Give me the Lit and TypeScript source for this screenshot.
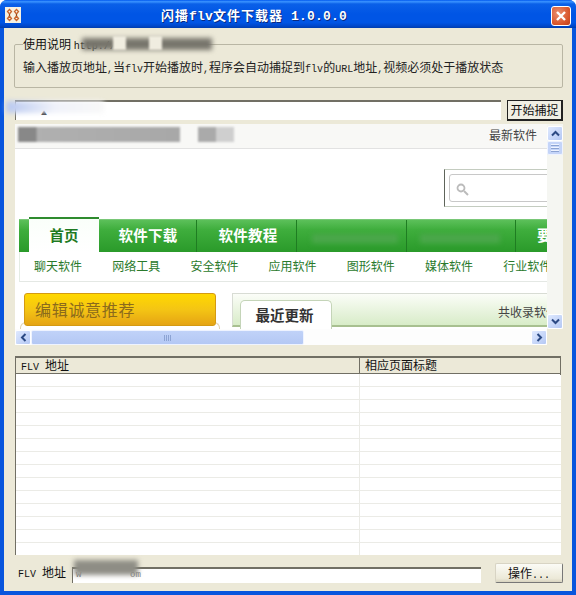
import { LitElement, html, css } from "lit";
import { customElement } from "lit/decorators.js";

const up = html`<svg width="9" height="7" viewBox="0 0 9 7"><path d="M1 5.5 4.5 2 8 5.5" fill="none" stroke="#2c4a84" stroke-width="2"/></svg>`;
const down = html`<svg width="9" height="7" viewBox="0 0 9 7"><path d="M1 1.5 4.5 5 8 1.5" fill="none" stroke="#2c4a84" stroke-width="2"/></svg>`;
const left = html`<svg width="7" height="9" viewBox="0 0 7 9"><path d="M5.5 1 2 4.5 5.5 8" fill="none" stroke="#2c4a84" stroke-width="2"/></svg>`;
const right = html`<svg width="7" height="9" viewBox="0 0 7 9"><path d="M1.5 1 5 4.5 1.5 8" fill="none" stroke="#2c4a84" stroke-width="2"/></svg>`;

@customElement("app-root")
export class AppRoot extends LitElement {
  static styles = css`
    :host {
      display: block;
      width: 576px;
      height: 595px;
      overflow: hidden;
      background: #fff;
      font-family: "Noto Sans CJK SC", "Liberation Sans", sans-serif;
      font-size: 12px;
      color: #111;
    }
    .lat { font-family: "Liberation Mono", monospace; font-size: 10px; }
    .window {
      position: relative;
      width: 576px;
      height: 595px;
      display: flex;
      flex-direction: column;
      box-sizing: border-box;
      background: #0855dd;
      border-radius: 7px 7px 0 0;
      overflow: hidden;
    }
    .titlebar {
      height: 28px;
      flex: none;
      display: flex;
      align-items: center;
      position: relative;
      background: linear-gradient(#0058ee 0, #3a93ff 6%, #0a60e8 14%, #0055e5 50%, #0055e5 80%, #0048cc 92%, #003dae 100%);
    }
    .appicon {
      width: 16px; height: 16px; margin-left: 5px; margin-top: 2px; background: #f6f1e2;
      display: flex; align-items: center; justify-content: center; flex: none;
    }
    .title {
      position: absolute;
      left: 161px;
      top: 6px;
      font-size: 13px;
      line-height: 18px;
      font-weight: 700;
      color: #fff;
      white-space: pre;
      letter-spacing: 1px;
      text-shadow: 1px 1px 0 #0a2a80;
    }
    .title .titlelat { font-family: "Liberation Mono", monospace; letter-spacing: 0.2px; }
    .close {
      position: absolute;
      right: 5px; top: 6px;
      width: 20px; height: 20px;
      box-sizing: border-box;
      border: 1px solid #fff;
      border-radius: 3px;
      background: radial-gradient(circle at 35% 35%, #ea8f70, #d9562c 65%, #bf3f1a);
      display: flex; align-items: center; justify-content: center;
    }
    .client {
      flex: 1;
      margin: 0 4px 4px;
      background: #ece9d8;
      padding: 16px 9px 0 10px;
      display: flex;
      flex-direction: column;
      min-height: 0;
    }
    .group {
      height: 44px;
      flex: none;
      box-sizing: border-box;
      border: 1px solid #b9b6a4;
      border-radius: 2px;
      padding-left: 8px;
    }
    .legend {
      display: block;
      width: fit-content;
      background: #ece9d8;
      padding: 0 3px 0 0;
      margin: -9px 0 0 0;
      height: 16px;
      line-height: 16px;
      font-size: 12px;
      white-space: nowrap;
    }
    .desc {
      display: block;
      margin-top: 7px;
      height: 16px;
      line-height: 16px;
      font-size: 12px;
      white-space: pre;
      color: #222;
    }
    .urlrow {
      display: flex;
      margin: 12px 0 0 1px;
      height: 21px;
      flex: none;
    }
    .field {
      background: #fff;
      box-sizing: border-box;
      border-top: 2px solid #716f64;
      border-left: 1px solid #716f64;
    }
    .url { width: 486px; height: 20px; padding: 6px 0 0 25px; font-size: 6px; line-height: 10px; color: #222; }
    .capture {
      margin-left: 6px;
      width: 56px;
      height: 21px;
      box-sizing: border-box;
      background: #f1efe4;
      border: 1px solid #222;
      border-right-width: 2px;
      border-bottom-width: 2px;
      font-size: 12px;
      line-height: 17px;
      text-align: center;
      white-space: nowrap;
    }
    .web {
      margin: 3px 0 0 1px;
      width: 548px;
      height: 221px;
      flex: none;
      display: grid;
      grid-template-columns: 532px 16px;
      grid-template-rows: 205px 16px;
    }
    .view {
      background: #fff;
      overflow: hidden;
      position: relative;
    }
    .page { width: 640px; }
    .topbar {
      height: 25px;
      box-sizing: border-box;
      background: #f8f8f6;
      border-bottom: 1px solid #e2e2e2;
      width: 532px;
      padding: 1px 10px 0 0;
      text-align: right;
      color: #444;
      line-height: 20px;
      font-size: 12px;
    }
    .searchwrap { height: 70px; box-sizing: border-box; padding: 20px 0 0 429px; }
    .search {
      width: 120px; height: 38px; box-sizing: border-box;
      border: 1px solid #c4ccc0;
      border-left: 1px solid #5e645a;
      padding: 4px;
    }
    .searchin {
      height: 28px; box-sizing: border-box;
      border: 1px solid #c8c8c8; border-radius: 3px;
      padding: 7px 0 0 6px;
    }
    .nav {
      margin-left: 4px;
      height: 33px;
      width: 620px;
      background: linear-gradient(#5cc05a 0, #3fae3d 30%, #2a9a2a 100%);
      border-top: 1px solid #79c777;
      box-sizing: border-box;
      display: flex;
      padding-left: 10px;
    }
    .tab {
      margin-top: -3px;
      height: 35px;
      width: 70px;
      flex: none;
      box-sizing: border-box;
      background: linear-gradient(#fafffa, #fff);
      border-top: 2px solid #2e8b2e;
      color: #1f7a22;
      font-weight: 700;
      font-size: 14.5px;
      line-height: 31px;
      text-align: center;
    }
    .navitem {
      flex: none;
      box-sizing: border-box;
      color: #fff;
      font-weight: 700;
      font-size: 14.5px;
      line-height: 29px;
      text-align: center;
      border-right: 1px solid #1f7d22;
      white-space: nowrap;
      letter-spacing: 0.3px;
    }
    .w98 { width: 98px; padding-left: 1px; }
    .w100 { width: 100px; padding-left: 3px; }
    .w110 { width: 110px; }
    .w109 { width: 109px; }
    .wlast { width: 60px; border: 0; padding-left: 21px; text-align: left; }
    .navblur { color: transparent; }
    .subnav {
      margin-left: 4px;
      width: 620px;
      height: 30px;
      box-sizing: border-box;
      border-bottom: 1px solid #e4e8e4;
      border-left: 1px solid #e4ece4;
      display: flex;
      color: #2a7a2c;
      font-size: 12px;
      line-height: 28px;
      white-space: nowrap;
    }
    .subnav span { width: 78.2px; flex: none; padding-left: 14px; box-sizing: border-box; }
    .lower { display: flex; margin: 11px 0 0 5px; height: 36px; }
    .leftcol { width: 212px; flex: none; position: relative; }
    .gold {
      position: relative;
      z-index: 1;
      margin-left: 4px;
      width: 192px;
      height: 33px;
      box-sizing: border-box;
      background: linear-gradient(#ffd800, #f4c514 50%, #e5a414);
      border: 1px solid #d49a12;
      border-radius: 3px;
      color: #8b6a1c;
      font-size: 16px;
      line-height: 30px;
      padding-left: 10px;
      letter-spacing: 0.7px;
    }
    .arc {
      position: absolute; left: 0; top: 29px;
      width: 200px; height: 14px;
      box-sizing: border-box;
      border: 1px solid #e0d2b0; border-bottom: 0;
      border-radius: 6px 6px 0 0;
      z-index: 0;
    }
    .latest {
      width: 340px; flex: none; height: 34px;
      box-sizing: border-box;
      background: linear-gradient(#fbfdf8, #d8ecc8);
      border-top: 1px solid #d8dcd4;
      border-left: 1px solid #d8dcd4;
      border-bottom: 2px solid #a8c090;
      display: flex;
      justify-content: space-between;
      padding-left: 7px;
    }
    .ltab {
      margin-top: 6px;
      width: 92px; height: 29px;
      box-sizing: border-box;
      background: #fff;
      border: 1px solid #c4d4b8;
      border-bottom: 0;
      border-radius: 5px 5px 0 0;
      font-weight: 700;
      font-size: 14.5px;
      line-height: 28px;
      padding-right: 3px;
      text-align: center;
      color: #333;
    }
    .count { color: #444; font-size: 12px; line-height: 36px; width: 74px; white-space: nowrap; flex: none; }
    .vbar {
      background: #f5f6f2;
      display: flex; flex-direction: column;
      padding: 2px 0 0;
    }
    .sbtn {
      width: 16px; height: 15px; flex: none;
      box-sizing: border-box;
      background: linear-gradient(135deg, #dfe9ff, #b4c8f4);
      border: 1px solid #fff;
      border-radius: 2px;
      display: flex; align-items: center; justify-content: center;
    }
    .thumbv {
      width: 16px; height: 14px; flex: none; box-sizing: border-box;
      background: #c4d4f8; border: 1px solid #eef3ff; border-radius: 2px;
      display: flex; flex-direction: column; align-items: center; justify-content: center; gap: 1px;
    }
    .thumbv i { display: block; width: 8px; height: 1px; background: #eef3ff; border-bottom: 1px solid #8ca3d3; }
    .vspace { flex: 1; }
    .hbar {
      background: #fdfdfd;
      display: flex;
      align-items: flex-end;
    }
    .thumbh {
      width: 273px; height: 15px; flex: none; box-sizing: border-box;
      background: linear-gradient(#c0d2f8, #b4c8f4);
      border: 1px solid #eef3ff; border-radius: 2px;
      display: flex; align-items: center; justify-content: center; gap: 1px;
    }
    .thumbh i { display: block; width: 1px; height: 6px; background: #8ca3d3; }
    .hspace { flex: 1; }
    .corner { background: #ece9d8; }
    .list {
      margin: 11px 0 0 1px;
      width: 546px;
      height: 199px;
      flex: none;
      box-sizing: border-box;
      background: #fff;
      border-top: 2px solid #716f64;
      border-left: 1px solid #716f64;
      overflow: hidden;
    }
    .head {
      display: grid;
      grid-template-columns: 344px 1fr;
      height: 16px;
      box-sizing: border-box;
      background: #ece9d8;
      border-bottom: 1px solid #716f64;
      font-size: 12px;
      line-height: 14px;
    }
    .head div { padding-left: 5px; border-right: 1px solid #716f64; white-space: pre; }
    .row {
      display: grid;
      grid-template-columns: 344px 1fr;
      height: 13px;
      box-sizing: border-box;
      border-bottom: 1px solid #ebebe6;
    }
    .row div:first-child { border-right: 1px solid #ebebe6; }
    .bottom {
      display: flex;
      align-items: flex-end;
      margin: 8px 0 0 4px;
      height: 20px;
      flex: none;
    }
    .blabel { width: 54px; flex: none; font-size: 12px; line-height: 17px; white-space: pre; }
    .bfield { width: 409px; height: 16px; flex: none; }
    .bfield span { display: block; font-size: 9px; line-height: 13px; padding-left: 3px; color: #777; white-space: pre; }
    .op {
      margin-left: 14px;
      width: 68px; height: 20px; box-sizing: border-box; flex: none;
      background: linear-gradient(#fbfbf6, #ece9d8 80%, #d8d4c0);
      border: 1px solid #d8d4c4;
      border-right: 1px solid #777;
      border-bottom: 1px solid #777;
      border-radius: 2px;
      text-align: center;
      font-size: 12px;
      line-height: 17px;
      white-space: pre;
    }
    .blur { position: absolute; filter: blur(2.5px); z-index: 5; }
    .b1 { left: 82px; top: 38px; width: 130px; height: 12px; background: #77756c; }
    .b1a { left: 113px; top: 36px; width: 13px; height: 14px; background: #f0ede0; filter: blur(1px); }
    .b1b { left: 149px; top: 36px; width: 13px; height: 14px; background: #f0ede0; filter: blur(1px); }
    .b2 { left: 6px; top: 101px; width: 98px; height: 12px; background: linear-gradient(90deg, #b8c8f0, #f0f2fa 50%, #f8f8f8); }
    .b3 { left: 18px; top: 127px; width: 162px; height: 15px; background: linear-gradient(90deg, #888 11%, #b0b0b0 12%, #a8a8a8 100%); filter: blur(1px); }
    .b4 { left: 198px; top: 127px; width: 36px; height: 15px; background: linear-gradient(90deg, #aaa 50%, #cfcfcf 50%); filter: blur(1px); }
    .b5 { left: 312px; top: 234px; width: 86px; height: 9px; background: #4ba74b; }
    .b6 { left: 420px; top: 234px; width: 80px; height: 9px; background: #4ba74b; }
    .b7 { left: 74px; top: 560px; width: 64px; height: 15px; background: #8e8d85; }
  `;

  render() {
    const rows = Array.from({ length: 14 });
    return html`
      <div class="window">
        <div class="titlebar">
          <div class="appicon">
            <svg width="14" height="14" viewBox="0 0 14 14" fill="none">
              <path d="M3.5 1.5 1.5 3.5 3.5 6 5.5 3.5ZM3.5 8 1.5 10.5 3.5 12.5 5.5 10.5ZM10.5 1.5 8.5 3.5 10.5 6 12.5 3.5ZM10.5 8 8.5 10.5 10.5 12.5 12.5 10.5Z" stroke="#c8642c" stroke-width="1.3"/>
              <path d="M3.5 6v2M10.5 6v2" stroke="#8a4a20" stroke-width="1.2"/>
            </svg>
          </div>
          <div class="title">闪播<span class="titlelat">flv</span>文件下载器<span class="titlelat"> 1.0.0.0</span></div>
          <div class="close">
            <svg width="14" height="14" viewBox="0 0 14 14"><path d="M3 3 11 11M11 3 3 11" stroke="#fff" stroke-width="2.4" fill="none"/></svg>
          </div>
        </div>
        <div class="client">
          <div class="group">
            <span class="legend">使用说明 <span class="lat">http://</span></span>
            <span class="desc">输入播放页地址<span class="lat">,</span>当<span class="lat">flv</span>开始播放时<span class="lat">,</span>程序会自动捕捉到<span class="lat">flv</span>的<span class="lat">URL</span>地址<span class="lat">,</span>视频必须处于播放状态</span>
          </div>
          <div class="urlrow">
            <div class="field url">▲</div>
            <div class="capture">开始捕捉</div>
          </div>
          <div class="web">
            <div class="view">
              <div class="page">
                <div class="topbar">最新软件</div>
                <div class="searchwrap">
                  <div class="search"><div class="searchin">
                    <svg width="13" height="13" viewBox="0 0 13 13"><circle cx="5" cy="5" r="3.5" fill="none" stroke="#bbb" stroke-width="1.8"/><path d="M8 8 12 12" stroke="#bbb" stroke-width="2"/></svg>
                  </div></div>
                </div>
                <div class="nav">
                  <div class="tab">首页</div>
                  <div class="navitem w98">软件下载</div>
                  <div class="navitem w100">软件教程</div>
                  <div class="navitem navblur w110">软件</div>
                  <div class="navitem navblur w109">软件</div>
                  <div class="navitem wlast">要闻</div>
                </div>
                <div class="subnav">
                  <span>聊天软件</span><span>网络工具</span><span>安全软件</span><span>应用软件</span><span>图形软件</span><span>媒体软件</span><span>行业软件</span>
                </div>
                <div class="lower">
                  <div class="leftcol">
                    <div class="gold">编辑诚意推荐</div>
                    <div class="arc"></div>
                  </div>
                  <div class="latest">
                    <div class="ltab">最近更新</div>
                    <div class="count">共收录软件</div>
                  </div>
                </div>
              </div>
            </div>
            <div class="vbar">
              <div class="sbtn">${up}</div>
              <div class="thumbv"><i></i><i></i><i></i></div>
              <div class="vspace"></div>
              <div class="sbtn">${down}</div>
            </div>
            <div class="hbar">
              <div class="sbtn">${left}</div>
              <div class="thumbh"><i></i><i></i><i></i><i></i></div>
              <div class="hspace"></div>
              <div class="sbtn">${right}</div>
            </div>
            <div class="corner"></div>
          </div>
          <div class="list">
            <div class="head"><div><span class="lat">FLV </span>地址</div><div>相应页面标题</div></div>
            ${rows.map(() => html`<div class="row"><div></div><div></div></div>`)}
          </div>
          <div class="bottom">
            <div class="blabel"><span class="lat">FLV </span>地址</div>
            <div class="field bfield"><span class="lat">w         om</span></div>
            <div class="op">操作<span class="lat">...</span></div>
          </div>
        </div>
        <div class="blur b1"></div>
        <div class="blur b1a"></div>
        <div class="blur b1b"></div>
        <div class="blur b2"></div>
        <div class="blur b3"></div>
        <div class="blur b4"></div>
        <div class="blur b5"></div>
        <div class="blur b6"></div>
        <div class="blur b7"></div>
      </div>
    `;
  }
}
